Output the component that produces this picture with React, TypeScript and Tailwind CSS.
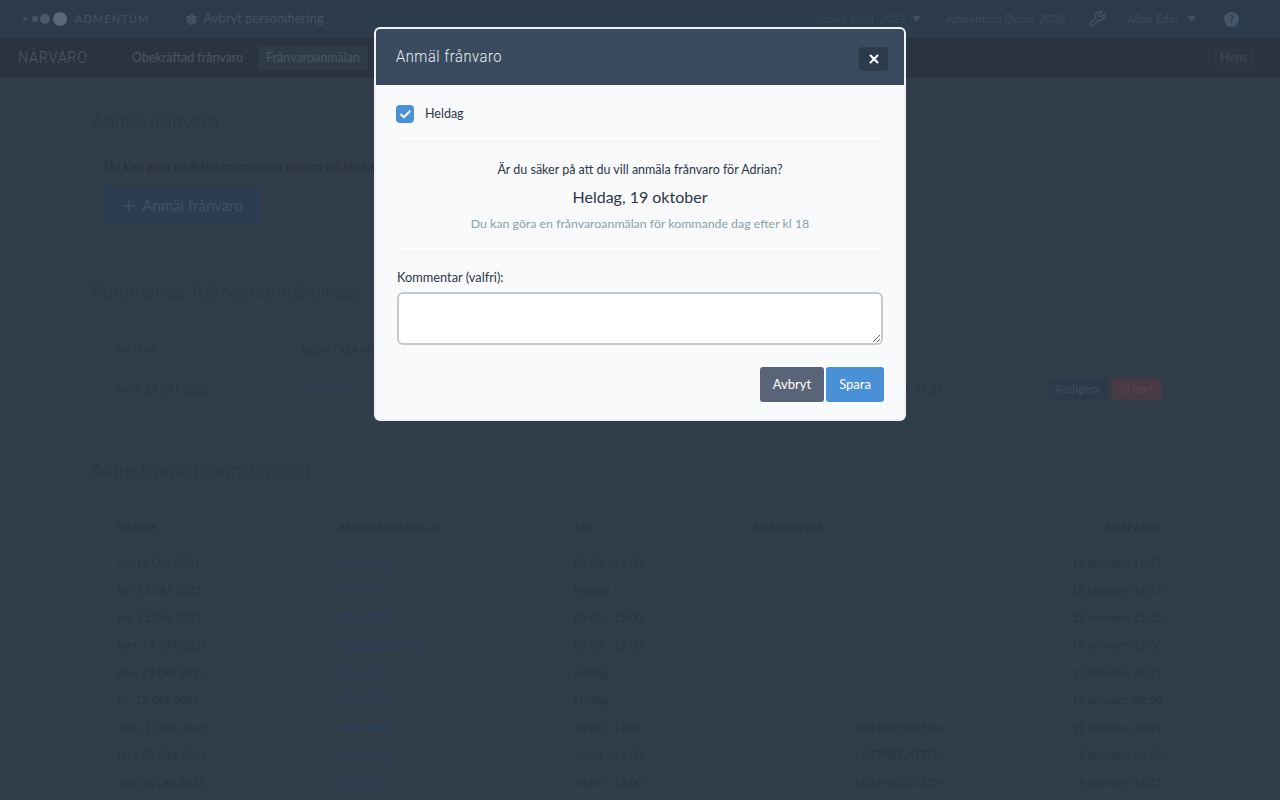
import React from 'react';
import { Check, Plus, Settings, Wrench, X } from 'lucide-react';

const olderRows = [
  { date: 'lör, 16 Okt 2021', by: 'Albin Edin', time: '09:00 - 12:00', comment: '', created: '15 oktober, 16:17' },
  { date: 'fre, 15 Okt 2021', by: 'Albin Mår', time: 'Heldag', comment: '', created: '15 oktober, 16:19' },
  { date: 'fre, 15 Okt 2021', by: 'Albin Edin', time: '09:00 - 12:00', comment: '', created: '15 oktober, 15:35' },
  { date: 'tors, 14 Okt 2021', by: 'Albinsson Adrian', time: '09:00 - 18:00', comment: '', created: '14 oktober, 15:06' },
  { date: 'ons, 13 Okt 2021', by: 'Albin Edin', time: 'Heldag', comment: '', created: '13 oktober, 16:11' },
  { date: 'tis, 12 Okt 2021', by: 'Albin Edin', time: 'Heldag', comment: '', created: '12 oktober, 09:50' },
  { date: 'mån, 11 Okt 2021', by: 'Albin Edin', time: '09:00 - 12:00', comment: '<DEPRECATED>', created: '11 oktober, 10:21' },
  { date: 'tors, 07 Okt 2021', by: 'Albin Edin', time: '10:24 - 12:00', comment: '<DEPRECATED>', created: '7 oktober, 10:22' },
  { date: 'ons, 06 Okt 2021', by: 'Albin Edin', time: '09:00 - 12:00', comment: '<DEPRECATED>', created: '6 oktober, 14:43' },
];

const thClass = 'text-[9.5px] font-bold tracking-[0.1em] text-[#2a3440]';
const thinFont = { fontFamily: 'Roboto, sans-serif', fontWeight: 300 };

const Caret = () => (
  <svg width="9" height="6" viewBox="0 0 9 6">
    <path d="M0 0h9L4.5 6z" fill="#415164" />
  </svg>
);

const LogoDots = () => (
  <div className="flex items-center">
    <span className="h-[4px] w-[4px] rounded-full bg-[#3f4e60]" />
    <span className="ml-[5px] h-[6px] w-[6px] rounded-full bg-[#465566]" />
    <span className="ml-[2px] h-[10px] w-[10px] rounded-full bg-[#4c5b6b]" />
    <span className="ml-[3px] h-[14px] w-[14px] rounded-full bg-[#5b6875]" />
  </div>
);

const TopBar = () => (
  <div className="flex h-[38px] items-center bg-[#2c3b4c] pl-[23px] pr-[41px] text-[11.5px] text-[#3a495b]">
    <LogoDots />
    <span className="ml-[8px] text-[11px] tracking-[0.1em] text-[#45535f]">ADMENTUM</span>
    <Settings className="ml-[37px] h-[11px] w-[11px] text-[#4a5866]" strokeWidth={3.5} />
    <span className="ml-[6px] text-[13px] text-[#425262]">Avbryt personifiering</span>
    <span className="ml-auto text-[11px] text-[#37475a]">Kurser 2021/2022</span>
    <span className="ml-[6px]"><Caret /></span>
    <span className="ml-[25px]">Admentum Demo 2020</span>
    <Wrench className="ml-[23px] h-[18px] w-[18px] text-[#4a5866]" strokeWidth={1.5} />
    <span className="ml-[21px]">Albin Edin</span>
    <span className="ml-[9px]"><Caret /></span>
    <span className="ml-[28px] flex h-[15px] w-[15px] items-center justify-center rounded-full bg-[#46566a] text-[11px] font-bold text-[#2c3b4c]">?</span>
  </div>
);

const NavBar = () => (
  <div className="flex h-[40px] items-center bg-[#2a3441] pl-[18px] pr-[27px] text-[12.5px] text-[#4a5663]">
    <span className="w-[114px] origin-left scale-x-[0.86] text-[17px] tracking-[0.04em] text-[#4b5866]" style={thinFont}>NÄRVARO</span>
    <span>Obekräftad frånvaro</span>
    <span className="ml-[15px] rounded-[4px] bg-[#303b48] px-[8px] py-[3px]">Frånvaroanmälan</span>
    <span className="ml-auto rounded-[4px] bg-[#2c3643] px-[7px] py-[3px] text-[#3e4a58]">Hem</span>
  </div>
);

const UpcomingTable = () => (
  <div className="mt-[40px] pl-[26px] pr-[27px]">
    <div className="grid grid-cols-[184px_460px_1fr] items-center">
      <span className={thClass}>DATUM</span>
      <span className={thClass}>REGISTRERADES AV</span>
      <span />
    </div>
    <div className="mt-[21px] grid grid-cols-[184px_1fr_218px] items-center text-[11.5px] text-[#2a3440]">
      <span>mån, 25 Okt 2021</span>
      <div className="flex justify-between">
        <span className="text-[#2b3e57]">Albin Edin</span>
        <span>18 oktober, 16:18</span>
      </div>
      <div className="flex justify-end gap-[3px] text-[11.5px]">
        <span className="rounded-[4px] bg-[#2d3a4a] px-[8px] py-[2px] text-[#3f4d5e]">Redigera</span>
        <span className="rounded-[4px] bg-[#463a45] px-[8px] py-[2px] text-[#5d4450]">Ta bort</span>
      </div>
    </div>
  </div>
);

const OlderTable = () => (
  <div className="mt-[39px] pl-[26px] pr-[27px]">
    <div className="grid grid-cols-[222px_235px_180px_190px_1fr] items-center">
      <span className={thClass}>DATUM</span>
      <span className={thClass}>REGISTRERADES AV</span>
      <span className={thClass}>TID</span>
      <span className={thClass}>KOMMENTAR</span>
      <span className={`${thClass} text-right`}>SKAPADES</span>
    </div>
    <div className="mt-[14px] flex flex-col text-[11.5px] text-[#2a3440]">
      {olderRows.map((row, i) => (
        <div key={i} className="grid h-[27.5px] grid-cols-[222px_235px_180px_190px_1fr] items-center">
          <span>{row.date}</span>
          <span className="text-[#2b3e57]">{row.by}</span>
          <span>{row.time}</span>
          <span className="text-right text-[12px]">{row.comment}</span>
          <span className="text-right">{row.created}</span>
        </div>
      ))}
    </div>
  </div>
);

const AbsenceModal = () => (
  <div className="fixed inset-0 flex justify-center pt-[27px]">
    <div className="h-[394px] w-[532px] overflow-hidden rounded-[6px] border-2 border-[#eef2f6] bg-[#f8fafc]">
      <div className="flex h-[56px] items-center justify-between bg-[#3a4b60] pl-[20px] pr-[16px]">
        <h2 className="origin-left scale-x-[0.86] text-[17px] tracking-[0.04em] text-[#edf2f7]" style={thinFont}>
          Anmäl frånvaro
        </h2>
        <button className="mt-[4px] flex h-[24px] w-[29px] items-center justify-center rounded-[4px] bg-[#2d3a4a]">
          <X className="h-[14px] w-[14px] text-white" strokeWidth={3.5} />
        </button>
      </div>
      <div className="px-[20px]">
        <div className="flex h-[57px] items-center gap-[11px] border-b border-[#edf1f5] pt-[2px]">
          <span className="flex h-[18px] w-[18px] items-center justify-center rounded-[4px] bg-[#4a90d6]">
            <Check className="h-[13px] w-[13px] text-white" strokeWidth={3.5} />
          </span>
          <span className="text-[12.5px] text-[#2d3748]">Heldag</span>
        </div>
        <div className="flex h-[111px] flex-col items-center border-b border-[#edf1f5] pt-[19px]">
          <p className="text-[12.5px] leading-[18px] text-[#2d3748]">Är du säker på att du vill anmäla frånvaro för Adrian?</p>
          <p className="mt-[6px] text-[16px] leading-[24px] text-[#2d3748]">Heldag, 19 oktober</p>
          <p className="mt-[6px] text-[12.35px] leading-[18px] text-[#8aa0a8]">Du kan göra en frånvaroanmälan för kommande dag efter kl 18</p>
        </div>
        <label className="ml-[1px] mt-[15px] block text-[12.8px] leading-[18px] text-[#2d3748]">Kommentar (valfri):</label>
        <textarea className="ml-[1px] mt-[6px] block h-[53px] w-[486px] rounded-[6px] border-2 border-[#c5c9cd] bg-white" />
        <div className="mt-[22px] flex justify-end gap-[2px] text-[13px] text-white">
          <button className="h-[35px] w-[64px] rounded-[3px] bg-[#5a6478]">Avbryt</button>
          <button className="h-[35px] w-[58px] rounded-[3px] bg-[#4a90d6]">Spara</button>
        </div>
      </div>
    </div>
  </div>
);

const App = () => {
  return (
    <div className="relative h-screen overflow-hidden bg-[#323d4a]" style={{ fontFamily: 'Lato, sans-serif' }}>
      <TopBar />
      <NavBar />

      <main className="px-[91px]">
        <h1 className="mt-[31px] text-[19.5px] font-light leading-[24px] text-[#2a3440]">Anmäl frånvaro</h1>
        <div className="mt-[25px] pl-[13px]">
          <p className="text-[12.5px] leading-[18px] text-[#28313c]">Du kan göra en frånvaroanmälan genom att klicka på knappen nedan</p>
          <button className="mt-[10px] flex h-[39px] w-[156px] items-center justify-center gap-[5px] rounded-[4px] bg-[#2c3d52] text-[15px] text-[#3f5064]">
            <Plus className="h-[16px] w-[16px]" />
            Anmäl frånvaro
          </button>
        </div>

        <h2 className="mt-[54px] text-[19.5px] font-light leading-[24px] text-[#2a3440]">Kommande frånvaroanmälningar</h2>
        <UpcomingTable />

        <h2 className="mt-[58px] text-[19.5px] font-light leading-[24px] text-[#2a3440]">Äldre frånvaroanmälningar</h2>
        <OlderTable />
      </main>

      <AbsenceModal />
    </div>
  );
};

export default App;
